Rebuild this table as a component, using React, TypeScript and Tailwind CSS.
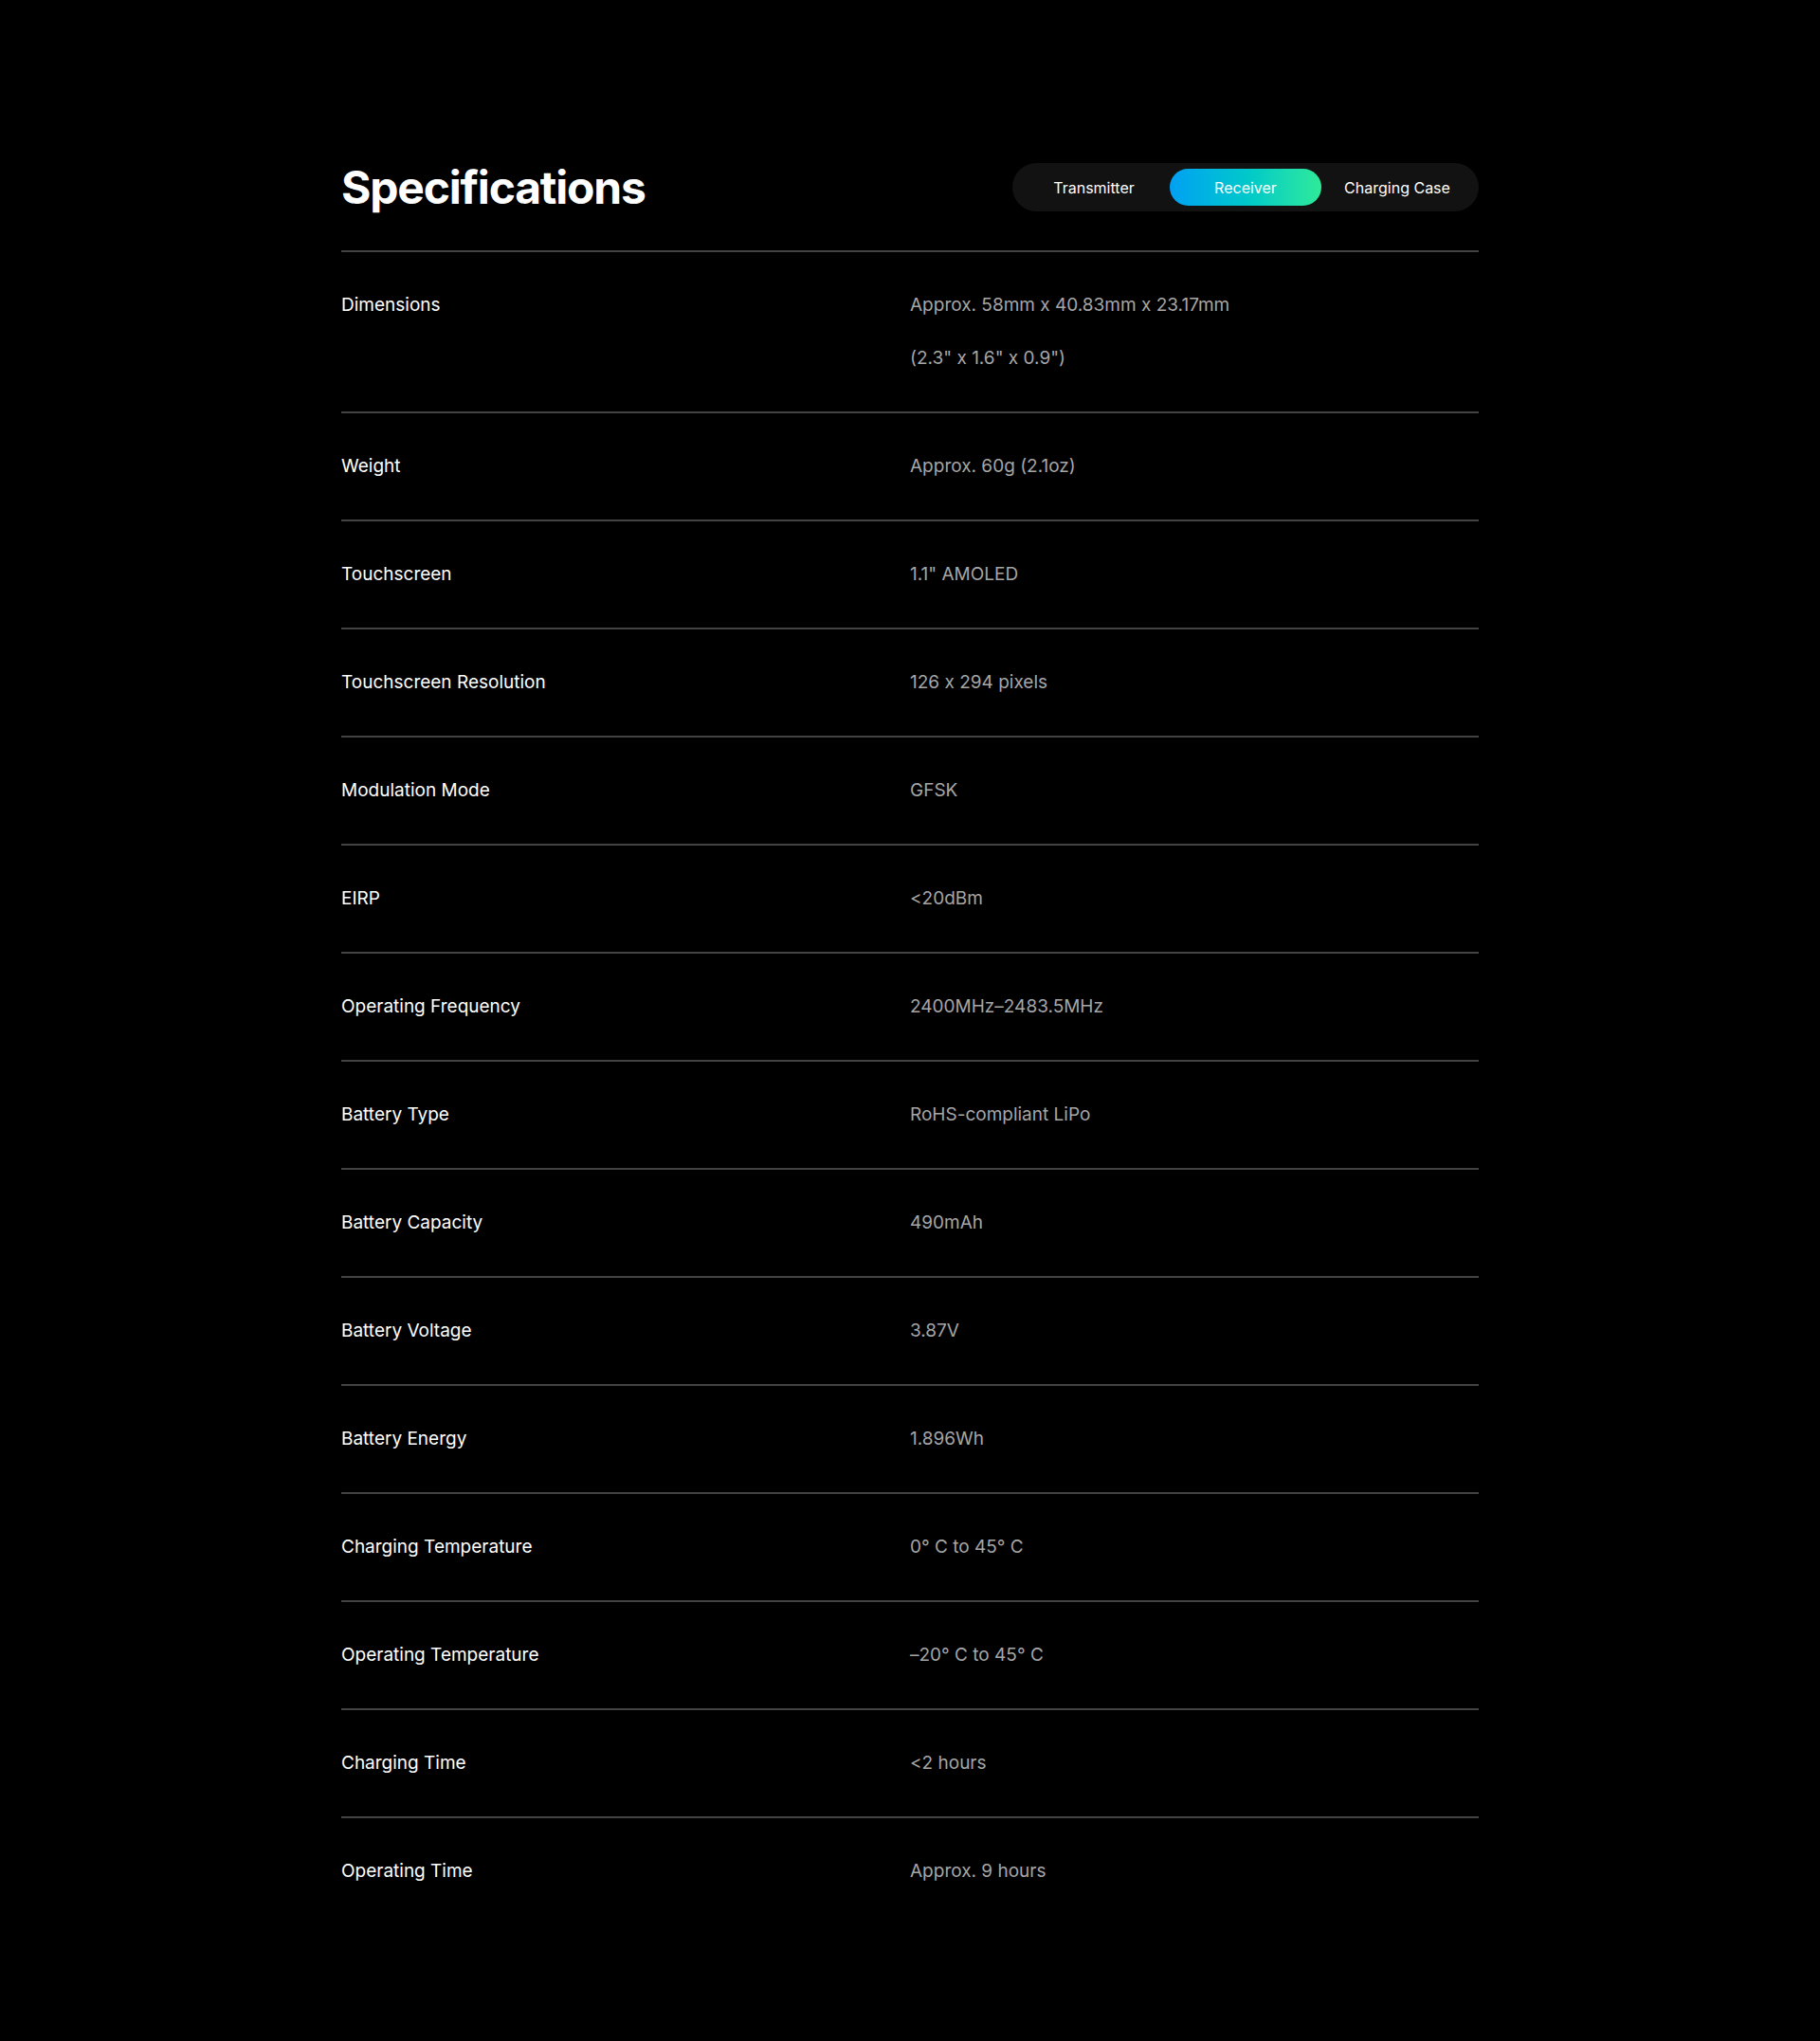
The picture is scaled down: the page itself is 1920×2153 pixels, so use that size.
import { useState } from "react";

const specs: { label: string; values: string[] }[] = [
  { label: "Dimensions", values: ["Approx. 58mm x 40.83mm x 23.17mm", "(2.3\" x 1.6\" x 0.9\")"] },
  { label: "Weight", values: ["Approx. 60g (2.1oz)"] },
  { label: "Touchscreen", values: ["1.1\" AMOLED"] },
  { label: "Touchscreen Resolution", values: ["126 x 294 pixels"] },
  { label: "Modulation Mode", values: ["GFSK"] },
  { label: "EIRP", values: ["<20dBm"] },
  { label: "Operating Frequency", values: ["2400MHz–2483.5MHz"] },
  { label: "Battery Type", values: ["RoHS-compliant LiPo"] },
  { label: "Battery Capacity", values: ["490mAh"] },
  { label: "Battery Voltage", values: ["3.87V"] },
  { label: "Battery Energy", values: ["1.896Wh"] },
  { label: "Charging Temperature", values: ["0° C to 45° C"] },
  { label: "Operating Temperature", values: ["–20° C to 45° C"] },
  { label: "Charging Time", values: ["<2 hours"] },
  { label: "Operating Time", values: ["Approx. 9 hours"] },
];

const tabs = ["Transmitter", "Receiver", "Charging Case"];

export default function App() {
  const [active, setActive] = useState("Receiver");

  return (
    <div className="min-h-[2153px] bg-black font-['Inter',sans-serif] text-white [font-feature-settings:'calt'_0]">
      <section className="mx-auto w-[1200px] pt-[172px] pb-[122px]">
        <div className="mb-[41px] flex items-center justify-between">
          <h2 className="text-[48px] font-bold leading-none tracking-tight">Specifications</h2>
          <div className="flex rounded-full bg-[#121212] p-[6px]">
            {tabs.map((tab) => (
              <button
                key={tab}
                onClick={() => setActive(tab)}
                className={
                  tab === active
                    ? "h-[39px] w-[160px] rounded-full bg-gradient-to-r from-[#00a0f2] to-[#2eea98] text-[16px] text-white"
                    : "h-[39px] w-[160px] rounded-full text-[16px] text-white"
                }
              >
                {tab}
              </button>
            ))}
          </div>
        </div>

        <div>
          {specs.map((spec) => (
            <div key={spec.label} className="grid grid-cols-2 border-t-2 border-[#424242] py-[42px] text-[19px] leading-[28px]">
              <div className="text-white">{spec.label}</div>
              <div className="flex flex-col gap-[28px] text-[#a6a6a6]">
                {spec.values.map((v) => (
                  <p key={v}>{v}</p>
                ))}
              </div>
            </div>
          ))}
        </div>
      </section>
    </div>
  );
}
